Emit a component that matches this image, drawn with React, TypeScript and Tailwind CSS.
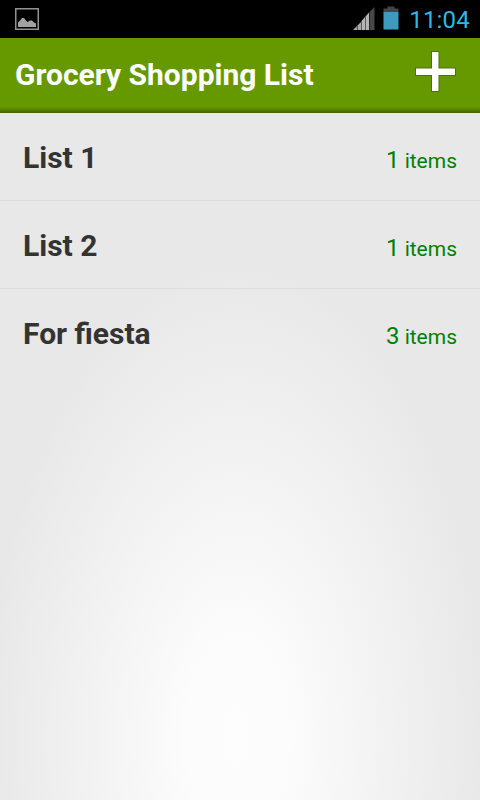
const lists = [
  { name: "List 1", count: 1 },
  { name: "List 2", count: 1 },
  { name: "For fiesta", count: 3 },
];

function PictureIcon() {
  return (
    <svg width="24" height="22" viewBox="0 0 24 22">
      <rect x="0.75" y="0.75" width="22.5" height="20.5" fill="none" stroke="#929292" strokeWidth="1.5" />
      <path d="M3 19V14.5L5.5 12L7 10H9L10.5 12L12.5 14L15 12.5H17L19 14.5L21 15.5V19Z" fill="#a2a2a2" />
    </svg>
  );
}

function SignalIcon() {
  return (
    <svg width="22" height="23" viewBox="0 0 22 23">
      <path d="M0 23L4 19V23Z" fill="#a8a8a8" />
      <path d="M4.5 23V18.5L8 15V23Z" fill="#a8a8a8" />
      <path d="M8.5 23V14L12 10V23Z" fill="#b4b4b4" />
      <path d="M12.5 23V9.5L16 5.5V23Z" fill="#b4b4b4" />
      <path d="M16.5 23V5L21.5 0V23Z" fill="#484848" />
    </svg>
  );
}

function BatteryIcon() {
  return (
    <svg width="16" height="24" viewBox="0 0 16 24">
      <path d="M4.5 0.5H11.5V2.5H15.5V6H0.5V2.5H4.5Z" fill="#454545" />
      <rect x="0.5" y="6" width="15" height="17.5" fill="#3d9cbe" />
    </svg>
  );
}

function StatusBar() {
  return (
    <div className="flex h-[38px] items-center bg-black pr-[10px] pl-[15px]">
      <PictureIcon />
      <div className="ml-auto flex items-center">
        <div className="pb-px">
          <SignalIcon />
        </div>
        <div className="ml-2 pb-0.5">
          <BatteryIcon />
        </div>
        <span className="ml-[10px] pt-0.5 text-[24px] leading-[36px] tracking-[0.2px] text-[#33b5e5]">11:04</span>
      </div>
    </div>
  );
}

function AppHeader() {
  return (
    <header className="flex h-[75px] items-center justify-between bg-[linear-gradient(to_bottom,#669900_0,#669900_69px,#5c8a00_71px,#3f5f00_75px)] pr-[23px] pl-[15px]">
      <h1 className="pb-0.5 text-[30px] leading-none font-bold text-white">Grocery Shopping List</h1>
      <button aria-label="Add list" className="mb-[8px]">
        <svg width="43" height="43" viewBox="0 0 43 43" className="block">
          <path d="M17 1H25.5V17.5H42V26H25.5V42H17V26H1V17.5H17Z" fill="#4d7300" />
          <path d="M18 2H24.5V18.5H41V25H24.5V41H18V25H2V18.5H18Z" fill="#fff" />
        </svg>
      </button>
    </header>
  );
}

export default function App() {
  return (
    <div className="flex h-[800px] w-[480px] flex-col overflow-hidden font-['Roboto',sans-serif]">
      <StatusBar />
      <AppHeader />
      <main className="flex-1 bg-[radial-gradient(ellipse_250px_480px_at_237px_625px,#fdfdfd_0%,#fcfcfc_20%,#e8e8e8_100%)]">
        <ul>
          {lists.map((list) => (
            <li
              key={list.name}
              className="flex h-[88px] items-baseline justify-between border-b border-[#dcdcdc] px-[23px] pt-[28px] last:border-b-0"
            >
              <span className="text-[30px] leading-[34px] font-bold text-[#333333]">{list.name}</span>
              <span className="text-[21px] text-[#008000]">
                <span className="text-[24px]">{list.count}</span> items
              </span>
            </li>
          ))}
        </ul>
      </main>
    </div>
  );
}
